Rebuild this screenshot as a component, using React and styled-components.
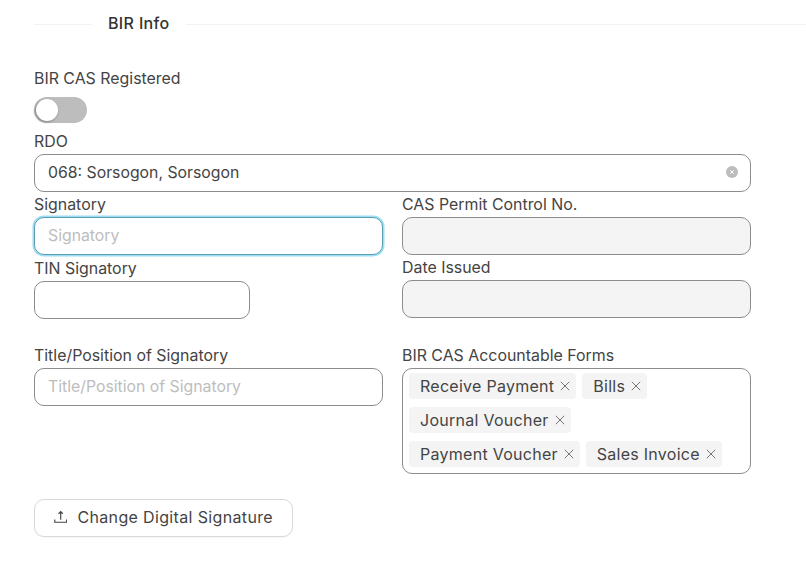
import React from "react";
import styled, { createGlobalStyle } from "styled-components";

const GlobalStyle = createGlobalStyle`
  html, body {
    margin: 0;
    padding: 0;
    background: #fff;
  }
  body {
    font-family: "Inter", "Liberation Sans", sans-serif;
    color: #333;
  }
`;

const forms = [
  "Receive Payment",
  "Bills",
  "Journal Voucher",
  "Payment Voucher",
  "Sales Invoice",
];

const CloseIcon = () => (
  <svg width="10" height="10" viewBox="0 0 10 10" fill="none" stroke="#777" strokeWidth="1">
    <path d="M.8.8l8.4 8.4M9.2.8L.8 9.2" />
  </svg>
);

const UploadIcon = () => (
  <svg width="14" height="14" viewBox="0 0 14 14" fill="none" stroke="#444" strokeWidth="1.2">
    <path d="M7 10V1.5M4.8 3.6L7 1.3l2.2 2.3M.8 9.5v3h12.4v-3" />
  </svg>
);

const ClearIcon = () => (
  <ClearWrap>
    <svg width="12" height="12" viewBox="0 0 12 12">
      <circle cx="6" cy="6" r="6" fill="#bdbdbd" />
      <path d="M4.2 4.2l3.6 3.6M7.8 4.2L4.2 7.8" stroke="#fff" strokeWidth="1" />
    </svg>
  </ClearWrap>
);

export default function App() {
  return (
    <Page>
      <GlobalStyle />
      <Divider>
        <DividerLine $width="58px" />
        <DividerTitle>BIR Info</DividerTitle>
        <DividerLine $grow />
      </Divider>

      <Form>
        <SwitchBlock>
          <Label>BIR CAS Registered</Label>
          <Switch>
            <Knob />
          </Switch>
        </SwitchBlock>

        <Field>
          <Label>RDO</Label>
          <Input as="div">
            <Value>068: Sorsogon, Sorsogon</Value>
            <ClearIcon />
          </Input>
        </Field>

        <Columns>
          <Column>
            <Field>
              <Label>Signatory</Label>
              <Input placeholder="Signatory" $focused readOnly />
            </Field>
            <Field $width="216px" $top="1px">
              <Label>TIN Signatory</Label>
              <Input readOnly />
            </Field>
          </Column>
          <Column>
            <Field>
              <Label>CAS Permit Control No.</Label>
              <Input disabled />
            </Field>
            <Field>
              <Label>Date Issued</Label>
              <Input disabled />
            </Field>
          </Column>
        </Columns>

        <Columns $top="24px">
          <Column>
            <Field>
              <Label>Title/Position of Signatory</Label>
              <Input placeholder="Title/Position of Signatory" readOnly />
            </Field>
          </Column>
          <Column>
            <Field>
              <Label>BIR CAS Accountable Forms</Label>
              <TagBox>
                {forms.map((form) => (
                  <Tag key={form}>
                    {form}
                    <CloseIcon />
                  </Tag>
                ))}
              </TagBox>
            </Field>
          </Column>
        </Columns>

        <UploadButton>
          <UploadIcon />
          Change Digital Signature
        </UploadButton>
      </Form>
    </Page>
  );
}

const Page = styled.div`
  width: 806px;
  height: 562px;
  box-sizing: border-box;
  padding: 12px 0 0 34px;
  overflow: hidden;
`;
const Divider = styled.div`
  display: flex;
  align-items: center;
  height: 24px;
`;
const DividerLine = styled.div`
  height: 1px;
  background: #f2f2f2;
  width: ${(props) => props.$width || "auto"};
  flex: ${(props) => (props.$grow ? 1 : "none")};
`;
const DividerTitle = styled.div`
  padding: 0 16px;
  margin-top: -2px;
  font-size: 16px;
  font-weight: 500;
  letter-spacing: 0.35px;
  color: #333;
`;
const Form = styled.div`
  width: 717px;
  padding-top: 30px;
  display: flex;
  flex-direction: column;
`;
const SwitchBlock = styled.div`
  display: flex;
  flex-direction: column;
  height: 63px;
`;
const Label = styled.label`
  display: block;
  height: 25px;
  line-height: 26px;
  font-size: 15.9px;
  color: #444;
  white-space: nowrap;
`;
const Switch = styled.div`
  width: 53px;
  height: 26px;
  margin-top: 6px;
  border-radius: 13px;
  background: #bdbdbd;
  position: relative;
`;
const Knob = styled.div`
  position: absolute;
  top: 2px;
  left: 2px;
  width: 22px;
  height: 22px;
  border-radius: 50%;
  background: #fff;
  box-shadow: -1px 1px 3px rgba(0, 0, 0, 0.35);
`;
const Field = styled.div`
  width: ${(props) => props.$width || "100%"};
  margin-top: ${(props) => props.$top || 0};
`;
const Input = styled.input`
  display: flex;
  align-items: center;
  justify-content: space-between;
  width: 100%;
  height: 38px;
  box-sizing: border-box;
  padding: 0 13px 2px;
  border: 1px solid ${(props) => (props.$focused ? "#5b9db5" : "#8c8c8c")};
  border-radius: 10px;
  background: #fff;
  font: inherit;
  font-size: 15.8px;
  color: #444;
  outline: none;
  box-shadow: ${(props) =>
    props.$focused ? "0 0 0 1.5px rgba(90, 200, 235, 0.6)" : "none"};

  &::placeholder {
    color: #bdbdbd;
  }
  &:disabled {
    background: #f4f4f4;
  }
`;
const Value = styled.span``;
const ClearWrap = styled.span`
  display: flex;
  margin-right: -1px;
`;
const Columns = styled.div`
  display: grid;
  grid-template-columns: 349px 349px;
  column-gap: 19px;
  margin-top: ${(props) => props.$top || 0};
`;
const Column = styled.div`
  display: flex;
  flex-direction: column;
`;
const TagBox = styled.div`
  display: flex;
  flex-wrap: wrap;
  align-content: flex-start;
  gap: 8px 6px;
  height: 106px;
  box-sizing: border-box;
  padding: 4px 6px;
  border: 1px solid #8c8c8c;
  border-radius: 10px;
`;
const Tag = styled.span`
  display: inline-flex;
  align-items: center;
  gap: 6px;
  height: 26px;
  padding: 0 6px 1px 11px;
  box-sizing: border-box;
  border-radius: 4px;
  background: #f4f4f4;
  font-size: 16px;
  letter-spacing: 0.27px;
  color: #444;
  white-space: nowrap;
`;
const UploadButton = styled.button`
  display: flex;
  align-items: center;
  gap: 10px;
  align-self: flex-start;
  width: 259px;
  height: 38px;
  margin-top: 25px;
  padding: 0 19px 2px;
  box-sizing: border-box;
  border: 1px solid #d9d9d9;
  border-radius: 10px;
  background: #fff;
  box-shadow: 0 1px 1px rgba(0, 0, 0, 0.03);
  font: inherit;
  font-size: 16px;
  letter-spacing: 0.35px;
  color: #444;
  white-space: nowrap;
`;
